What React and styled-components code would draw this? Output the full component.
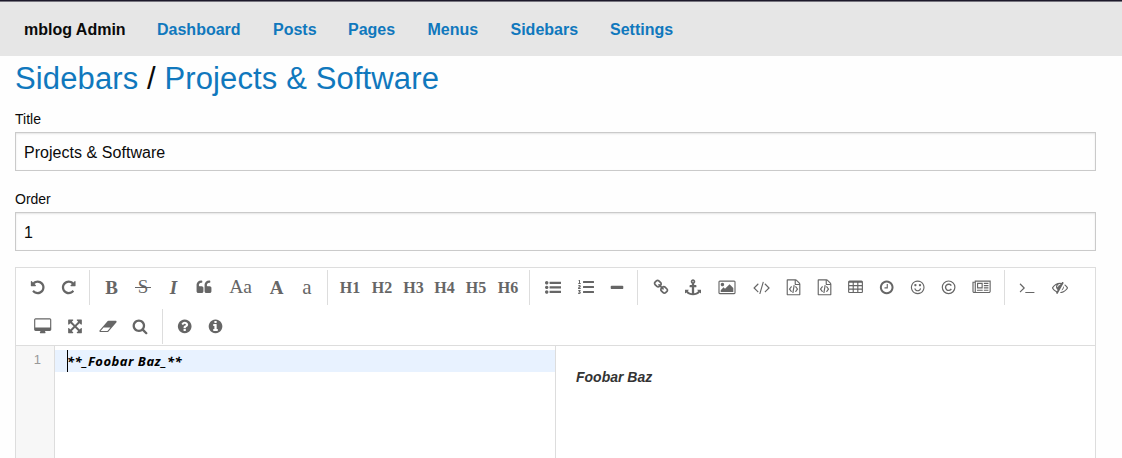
import React from "react";
import styled, { createGlobalStyle } from "styled-components";
import { FaListOl } from "react-icons/fa";

const Global = createGlobalStyle`
  * { box-sizing: border-box; }
  body {
    margin: 0;
    background: #fefefe;
    color: #0a0a0a;
    font-family: "Liberation Sans", Helvetica, Arial, sans-serif;
    overflow: hidden;
  }
`;

const Page = styled.div`
  height: 458px;
  overflow: hidden;
  display: flex;
  flex-direction: column;
`;

const TopBar = styled.nav`
  flex: none;
  height: 56px;
  padding: 4px 24px 0;
  display: flex;
  align-items: center;
  gap: 32px;
  background: linear-gradient(#1d1a2b 0 1px, #77757f 1px 2px, #e6e6e6 2px);
  font-size: 16px;
  line-height: 20px;
  font-weight: bold;
`;

const NavItem = styled.span`
  flex: none;
  width: ${(p) => p.$w}px;
  white-space: nowrap;
  color: ${(p) => (p.$brand ? "#0a0a0a" : "#1078bd")};
`;

const Content = styled.main`
  flex: 1;
  display: flex;
  flex-direction: column;
  width: 1111px;
  padding: 0 15px;
`;

const Heading = styled.h3`
  margin: 0;
  height: 52px;
  padding-top: 1px;
  font-size: 31px;
  line-height: 44px;
  font-weight: normal;
  letter-spacing: 0.12px;
  white-space: nowrap;
`;

const Crumb = styled.a`
  color: #1078bd;
`;

const Field = styled.label`
  display: flex;
  flex-direction: column;
  height: 80px;
  font-size: 14px;
  line-height: 24px;
`;

const FieldName = styled.span`
  height: 24px;
  line-height: 23px;
`;

const Input = styled.input`
  height: 39px;
  width: 100%;
  padding: 2px 8px 0;
  border: 1px solid #cacaca;
  border-radius: 0;
  background: #fefefe;
  box-shadow: inset 0 1px 2px rgba(10, 10, 10, 0.1);
  color: #0a0a0a;
  font: 16px "Liberation Sans", Arial, sans-serif;
  letter-spacing: 0.04px;
  outline: none;
`;

const Editor = styled.section`
  flex: 1;
  display: flex;
  flex-direction: column;
  width: 1081px;
  margin-top: -1px;
  border: 1px solid #ddd;
  border-bottom: 0;
  background: #fff;
`;

const Toolbar = styled.div`
  height: 78px;
  border-bottom: 1px solid #ddd;
  color: #666;
`;

const ToolRow = styled.div`
  display: flex;
  height: 39px;
  padding: 2px 0 0 ${(p) => p.$start}px;
`;

const Tool = styled.span`
  flex: none;
  width: ${(p) => p.$w}px;
  height: 34px;
  display: flex;
  align-items: center;
  justify-content: center;
`;

const Separator = styled.span`
  flex: none;
  width: 1px;
  height: 35px;
  margin: 0 6px 0 5px;
  background: #ddd;
`;

const Letter = styled.span`
  font-family: "Liberation Serif", "Times New Roman", serif;
  font-size: ${(p) => p.$size}px;
  font-weight: ${(p) => (p.$bold ? "bold" : "normal")};
  font-style: ${(p) => (p.$italic ? "italic" : "normal")};
  line-height: 34px;
  padding-top: ${(p) => p.$drop || 0}px;
  white-space: nowrap;
`;

const Struck = styled(Letter)`
  width: 16px;
  text-align: center;
  background: linear-gradient(currentColor, currentColor) center 17px / 16px 1px no-repeat;
`;

const Svg = styled.svg`
  flex: none;
  display: block;
  overflow: visible;
  fill: currentColor;
`;

const Panes = styled.div`
  flex: 1;
  display: flex;
`;

const Gutter = styled.div`
  width: 39px;
  padding: 4px 13px 0 0;
  background: #f7f7f7;
  border-right: 1px solid #ddd;
  color: #999;
  text-align: right;
  font-size: 13px;
  line-height: 20px;
`;

const CodePane = styled.div`
  width: 501px;
  padding-top: 4px;
  border-right: 1px solid #ddd;
`;

const ActiveLine = styled.div`
  height: 22px;
  padding-left: 12px;
  display: flex;
  background: #e8f2ff;
`;

const Source = styled.span`
  border-left: 1px solid #000;
  color: #000;
  font: italic bold 13px/22px "Noto Sans", sans-serif;
  letter-spacing: 0.5px;
  text-indent: -1px;
  white-space: pre;
`;

const Preview = styled.div`
  flex: 1;
  padding: 20px;
  color: #333;
  font-size: 14px;
  line-height: 22px;
  font-weight: bold;
  font-style: italic;
`;

const disc =
  "M1664 896q0 209-103 385.5t-279.5 279.5-385.5 103-385.5-103-279.5-279.5-103-385.5 103-385.5 279.5-279.5 385.5-103 385.5 103 279.5 279.5 103 385.5z";

const cell = (x, y) =>
  `M${x + 32} ${y}h320q32 0 32 32v192q0 32-32 32h-320q-32 0-32-32v-192q0-32 32-32z`;
const cells = [384, 768, 1152].map((y) => [192, 704, 1216].map((x) => cell(x, y)).join("")).join("");

const PATHS = {
  undo: "M1664 896q0 156-61 298t-164 245-245 164-298 61q-172 0-327-72.5t-264-204.5q-7-10-6.5-22.5t8.5-20.5l137-138q10-9 25-9 16 2 23 12 73 95 179 147t225 52q104 0 198.5-40.5t163.5-109.5 109.5-163.5 40.5-198.5-40.5-198.5-109.5-163.5-163.5-109.5-198.5-40.5q-98 0-188 35.5t-160 101.5l137 138q31 30 14 69-17 40-59 40h-448q-26 0-45-19t-19-45v-448q0-42 40-59 39-17 69 14l130 129q107-101 244.5-156.5t284.5-55.5q156 0 298 61t245 164 164 245 61 298z",
  redo: "M1664 256v448q0 26-19 45t-45 19h-448q-42 0-59-40-17-39 14-69l138-138q-148-137-349-137-104 0-198.5 40.5t-163.5 109.5-109.5 163.5-40.5 198.5 40.5 198.5 109.5 163.5 163.5 109.5 198.5 40.5q119 0 225-52t179-147q7-10 23-12 15 0 25 9l137 137q9 8 9.5 20.5t-7.5 22.5q-109 132-264 204.5t-327 72.5q-156 0-298-61t-245-164-164-245-61-298 61-298 164-245 245-164 298-61q147 0 284.5 55.5t244.5 156.5l130-129q29-31 70-14 39 17 39 59z",
  quote: "M832 960v384q0 80-56 136t-136 56h-384q-80 0-136-56t-56-136v-704q0-104 40.5-198.5t109.5-163.5 163.5-109.5 198.5-40.5h64q26 0 45 19t19 45v128q0 26-19 45t-45 19h-64q-106 0-181 75t-75 181v32q0 40 28 68t68 28h224q80 0 136 56t56 136zm896 0v384q0 80-56 136t-136 56h-384q-80 0-136-56t-56-136v-704q0-104 40.5-198.5t109.5-163.5 163.5-109.5 198.5-40.5h64q26 0 45 19t19 45v128q0 26-19 45t-45 19h-64q-106 0-181 75t-75 181v32q0 40 28 68t68 28h224q80 0 136 56t56 136z",
  list: "M384 1408q0 80-56 136t-136 56-136-56-56-136 56-136 136-56 136 56 56 136zm0-512q0 80-56 136t-136 56-136-56-56-136 56-136 136-56 136 56 56 136zm1408 416v192q0 13-9.5 22.5t-22.5 9.5h-1216q-13 0-22.5-9.5t-9.5-22.5v-192q0-13 9.5-22.5t22.5-9.5h1216q13 0 22.5 9.5t9.5 22.5zm-1408-928q0 80-56 136t-136 56-136-56-56-136 56-136 136-56 136 56 56 136zm1408 416v192q0 13-9.5 22.5t-22.5 9.5h-1216q-13 0-22.5-9.5t-9.5-22.5v-192q0-13 9.5-22.5t22.5-9.5h1216q13 0 22.5 9.5t9.5 22.5zm0-512v192q0 13-9.5 22.5t-22.5 9.5h-1216q-13 0-22.5-9.5t-9.5-22.5v-192q0-13 9.5-22.5t22.5-9.5h1216q13 0 22.5 9.5t9.5 22.5z",
  minus: "M1600 800v192q0 40-28 68t-68 28h-1216q-40 0-68-28t-28-68v-192q0-40 28-68t68-28h1216q40 0 68 28t28 68z",
  link: "M1520 1216q0-40-28-68l-208-208q-28-28-68-28-42 0-72 32 3 3 19 18.5t21.5 21.5 15 19 13 25.5 3.5 27.5q0 40-28 68t-68 28q-15 0-27.5-3.5t-25.5-13-19-15-21.5-21.5-18.5-19q-33 31-33 73 0 40 28 68l206 207q27 27 68 27 40 0 68-26l147-146q28-28 28-67zm-703-705q0-40-28-68l-206-207q-28-28-68-28-39 0-68 27l-147 146q-28 28-28 67 0 40 28 68l208 208q27 27 68 27 42 0 72-31-3-3-19-18.5t-21.5-21.5-15-19-13-25.5-3.5-27.5q0-40 28-68t68-28q15 0 27.5 3.5t25.5 13 19 15 21.5 21.5 18.5 19q33-31 33-73zm895 705q0 120-85 203l-147 146q-83 83-203 83-121 0-204-85l-206-207q-83-83-83-203 0-123 88-209l-88-88q-86 88-208 88-120 0-204-84l-208-208q-84-84-84-204t85-203l147-146q83-83 203-83 121 0 204 85l206 207q83 83 83 203 0 123-88 209l88 88q86-88 208-88 120 0 204 84l208 208q84 84 84 204z",
  anchor: "M960 256q0-26-19-45t-45-19-45 19-19 45 19 45 45 19 45-19 19-45zm832 928v352q0 22-20 30-8 2-12 2-12 0-23-9l-93-93q-119 143-318.5 226.5t-429.5 83.5-429.5-83.5-318.5-226.5l-93 93q-9 9-23 9-4 0-12-2-20-8-20-30v-352q0-14 9-23t23-9h352q22 0 30 20 8 19-7 35l-100 100q67 91 189.5 153.5t271.5 82.5v-647h-192q-26 0-45-19t-19-45v-128q0-26 19-45t45-19h192v-163q-58-34-93-92.5t-35-128.5q0-106 75-181t181-75 181 75 75 181q0 70-35 128.5t-93 92.5v163h192q26 0 45 19t19 45v128q0 26-19 45t-45 19h-192v647q149-20 271.5-82.5t189.5-153.5l-100-100q-15-16-7-35 8-20 30-20h352q14 0 23 9t9 23z",
  picture: "M704 576q0 80-56 136t-136 56-136-56-56-136 56-136 136-56 136 56 56 136zm1024 384v448h-1408v-192l320-320 160 160 512-512zm96-704h-1600q-13 0-22.5 9.5t-9.5 22.5v1216q0 13 9.5 22.5t22.5 9.5h1600q13 0 22.5-9.5t9.5-22.5v-1216q0-13-9.5-22.5t-22.5-9.5zm160 32v1216q0 66-47 113t-113 47h-1600q-66 0-113-47t-47-113v-1216q0-66 47-113t113-47h1600q66 0 113 47t47 113z",
  code: "M681 1399l-50 50q-10 10-23 10t-23-10l-466-466q-10-10-10-23t10-23l466-466q10-10 23-10t23 10l50 50q10 10 10 23t-10 23l-393 393 393 393q10 10 10 23t-10 23zm591-1067l-373 1291q-4 13-15.5 19.5t-23.5 2.5l-62-17q-13-4-19.5-15.5t-2.5-24.5l373-1291q4-13 15.5-19.5t23.5-2.5l62 17q13 4 19.5 15.5t2.5 24.5zm657 651l-466 466q-10 10-23 10t-23-10l-50-50q-10-10-10-23t10-23l393-393-393-393q-10-10-10-23t10-23l50-50q10-10 23-10t23 10l466 466q10 10 10 23t-10 23z",
  file: "M1596 380q28 28 48 76t20 88v1152q0 40-28 68t-68 28h-1344q-40 0-68-28t-28-68v-1600q0-40 28-68t68-28h896q40 0 88 20t76 48zm-444-244v376h376q-10-29-22-41l-313-313q-12-12-41-22zm384 1528v-1024h-416q-40 0-68-28t-28-68v-416h-768v1536h1280zm-928-896q8-11 21-12.5t24 6.5l51 38q11 8 12.5 21t-6.5 24l-182 243 182 243q8 11 6.5 24t-12.5 21l-51 38q-11 8-24 6.5t-21-12.5l-226-301q-14-19 0-38zm802 301q14 19 0 38l-226 301q-8 11-21 12.5t-24-6.5l-51-38q-11-8-12.5-21t6.5-24l182-243-182-243q-8-11-6.5-24t12.5-21l51-38q11-8 24-6.5t21 12.5zm-620 461q-13-2-20.5-13t-5.5-24l138-831q2-13 13-20.5t24-5.5l63 10q13 2 20.5 13t5.5 24l-138 831q-2 13-13 20.5t-24 5.5z",
  table: "M224 128h1344q66 0 113 47t47 113v1088q0 66-47 113t-113 47h-1344q-66 0-113-47t-47-113v-1088q0-66 47-113t113-47z" + cells,
  clock: "M1024 544v448q0 14-9 23t-23 9h-320q-14 0-23-9t-9-23v-64q0-14 9-23t23-9h224v-352q0-14 9-23t23-9h64q14 0 23 9t9 23zm416 352q0-148-73-273t-198-198-273-73-273 73-198 198-73 273 73 273 198 198 273 73 273-73 198-198 73-273z" + disc,
  smile: "M1262 1075q-37 121-138 195t-228 74-228-74-138-195q-8-25 4-48.5t38-31.5q25-8 48.5 4t31.5 38q25 80 92.5 129.5t151.5 49.5 151.5-49.5 92.5-129.5q8-26 32-38t49-4 37 31.5 4 48.5zm-494-435q0 53-37.5 90.5t-90.5 37.5-90.5-37.5-37.5-90.5 37.5-90.5 90.5-37.5 90.5 37.5 37.5 90.5zm512 0q0 53-37.5 90.5t-90.5 37.5-90.5-37.5-37.5-90.5 37.5-90.5 90.5-37.5 90.5 37.5 37.5 90.5zm256 256q0-130-51-248.5t-136.5-204-204-136.5-248.5-51-248.5 51-204 136.5-136.5 204-51 248.5 51 248.5 136.5 204 204 136.5 248.5 51 248.5-51 204-136.5 136.5-204 51-248.5zm128 0q0 209-103 385.5t-279.5 279.5-385.5 103-385.5-103-279.5-279.5-103-385.5 103-385.5 279.5-279.5 385.5-103 385.5 103 279.5 279.5 103 385.5z",
  news: "M1024 512h-384v384h384v-384zm128 640v128h-640v-128h640zm0-768v640h-640v-640h640zm640 768v128h-512v-128h512zm0-256v128h-512v-128h512zm0-256v128h-512v-128h512zm0-256v128h-512v-128h512zm-1536 960v-960h-128v960q0 26 19 45t45 19 45-19 19-45zm1664 0v-1088h-1536v1088q0 33-11 64h1483q26 0 45-19t19-45zm128-1216v1216q0 80-56 136t-136 56h-1664q-80 0-136-56t-56-136v-1088h256v-128h1792z",
  terminal: "M649 983l-466 466q-10 10-23 10t-23-10l-50-50q-10-10-10-23t10-23l393-393-393-393q-10-10-10-23t10-23l50-50q10-10 23-10t23 10l466 466q10 10 10 23t-10 23zm1079 457v64q0 14-9 23t-23 9h-960q-14 0-23-9t-9-23v-64q0-14 9-23t23-9h960q14 0 23 9t9 23z",
  eyeSlash: "M555 1335l78-141q-87-63-136-159t-49-203q0-121 61-225-229 117-381 353 167 258 427 375zm389-759q0-20-14-34t-34-14q-125 0-214.5 89.5t-89.5 214.5q0 20 14 34t34 14 34-14 14-34q0-86 61-147t147-61q20 0 34-14t14-34zm363-191q0 7-1 9-105 188-315 566t-316 567l-49 89q-10 16-28 16-12 0-134-70-16-10-16-28 0-12 44-87-143-65-263.5-173t-208.5-245q-20-31-20-69t20-69q153-235 380-371t496-136q89 0 180 17l54-97q10-16 28-16 5 0 18 6t31 15.5 33 18.5 31.5 18.5 19.5 11.5q16 10 16 27zm37 447q0 139-79 253.5t-209 164.5l280-502q8 45 8 84zm448 128q0 35-20 69-39 64-109 145-150 172-347.5 267t-419.5 95l74-132q212-18 392.5-137t301.5-307q-115-179-282-294l63-112q95 64 182.5 153t144.5 184q20 34 20 69z",
  desktop: "M1728 992v-832q0-13-9.5-22.5t-22.5-9.5h-1600q-13 0-22.5 9.5t-9.5 22.5v832q0 13 9.5 22.5t22.5 9.5h1600q13 0 22.5-9.5t9.5-22.5zm128-832v1088q0 66-47 113t-113 47h-544q0 37 16 77.5t32 71 16 43.5q0 26-19 45t-45 19h-512q-26 0-45-19t-19-45q0-14 16-44t32-70 16-78h-544q-66 0-113-47t-47-113v-1088q0-66 47-113t113-47h1600q66 0 113 47t47 113z",
  arrows: "M1411 541l-355 355 355 355 144-144q29-31 70-14 39 17 39 59v448q0 26-19 45t-45 19h-448q-42 0-59-40-17-39 14-69l144-144-355-355-355 355 144 144q31 30 14 69-17 40-59 40h-448q-26 0-45-19t-19-45v-448q0-42 40-59 39-17 69 14l144 144 355-355-355-355-144 144q-19 19-45 19-12 0-24-5-40-17-40-59v-448q0-26 19-45t45-19h448q42 0 59 40 17 39-14 69l-144 144 355 355 355-355-144-144q-31-30-14-69 17-40 59-40h448q26 0 45 19t19 45v448q0 42-39 59-13 5-25 5-26 0-45-19z",
  eraser: "M832 1408l336-384h-768l-336 384h768zm1013-1077q15 34 9.5 71.5t-30.5 65.5l-896 1024q-38 44-96 44h-768q-38 0-69.5-20.5t-47.5-54.5q-15-34-9.5-71.5t30.5-65.5l896-1024q38-44 96-44h768q38 0 69.5 20.5t47.5 54.5z",
  search: "M1216 832q0-185-131.5-316.5t-316.5-131.5-316.5 131.5-131.5 316.5 131.5 316.5 316.5 131.5 316.5-131.5 131.5-316.5zm512 832q0 52-38 90t-90 38q-54 0-90-38l-343-342q-179 124-399 124-143 0-273.5-55.5t-225-150-150-225-55.5-273.5 55.5-273.5 150-225 225-150 273.5-55.5 273.5 55.5 225 150 150 225 55.5 273.5q0 220-124 399l343 343q37 37 37 90z",
  question: "M1024 1376v-192q0-14-9-23t-23-9h-192q-14 0-23 9t-9 23v192q0 14 9 23t23 9h192q14 0 23-9t9-23zm256-672q0-88-55.5-163t-138.5-116-170-41q-243 0-371 213-15 24 8 42l132 100q7 6 19 6 16 0 25-12 53-68 86-92 34-24 86-24 48 0 85.5 26t37.5 59q0 38-20 61t-68 45q-63 28-115.5 86.5t-52.5 125.5v36q0 14 9 23t23 9h192q14 0 23-9t9-23q0-19 21.5-49.5t54.5-49.5q32-18 49-28.5t46-35 44.5-48 28-60.5 12.5-81z" + disc,
  info: "M1152 1376v-160q0-14-9-23t-23-9h-96v-512q0-14-9-23t-23-9h-320q-14 0-23 9t-9 23v160q0 14 9 23t23 9h96v320h-96q-14 0-23 9t-9 23v160q0 14 9 23t23 9h448q14 0 23-9t9-23zm-128-896v-160q0-14-9-23t-23-9h-192q-14 0-23 9t-9 23v160q0 14 9 23t23 9h192q14 0 23-9t9-23z" + disc,
};

const CENTRES = { picture: 1024, code: 1072, news: 1072, file: 950, table: 950, clock: 930, smile: 930, question: 930, info: 950, undo: 930, redo: 930, desktop: 930 };

const Icon = ({ name }) => {
  const x = (CENTRES[name] || 896) - 896;
  return (
    <Svg width="16" height="16" viewBox={`${x} -40 1792 1792`}>
      <path fillRule="evenodd" d={PATHS[name]} />
    </Svg>
  );
};

const Copyright = () => (
  <Svg width="16" height="16" viewBox="0 0 16 16">
    <g style={{ fill: "none" }} stroke="currentColor">
      <circle cx="7.6" cy="8.3" r="6.3" strokeWidth="1.2" />
      <path d="M10.3 6.7A3.1 3.1 0 1 0 10.3 9.9" strokeWidth="1.4" />
    </g>
  </Svg>
);

const icon = (name, w) => ({ w, node: <Icon name={name} /> });
const letter = (text, w, $size, extra = {}) => ({ w, node: <Letter $size={$size} {...extra}>{text}</Letter> });
const sep = { sep: true };

const MAIN_TOOLS = [
  icon("undo", 31), icon("redo", 31), sep,
  letter("B", 31, 19, { $bold: true, $drop: 1 }),
  { w: 32, node: <Struck $size={19}>S</Struck> },
  letter("I", 29, 19, { $bold: true, $italic: true, $drop: 1 }),
  icon("quote", 32),
  letter("Aa", 41, 19.5), letter("A", 31, 19, { $bold: true, $drop: 1 }), letter("a", 30, 21), sep,
  ...[32, 32, 31, 31, 32, 32].map((w, i) => letter(`H${i + 1}`, w, 16, { $bold: true, $drop: 2 })), sep,
  icon("list", 34), { w: 32, node: <FaListOl size={16} /> }, icon("minus", 30), sep,
  icon("link", 34), icon("anchor", 30), icon("picture", 37), icon("code", 33),
  icon("file", 31), icon("file", 31), icon("table", 31), icon("clock", 31), icon("smile", 31),
  { w: 31, node: <Copyright /> }, icon("news", 35), sep,
  icon("terminal", 32), icon("eyeSlash", 34),
];

const MORE_TOOLS = [
  icon("desktop", 31), icon("arrows", 34), icon("eraser", 31), icon("search", 34), sep,
  icon("question", 32), icon("info", 29),
];

const Tools = ({ items, start }) => (
  <ToolRow $start={start}>
    {items.map((t, i) => (t.sep ? <Separator key={i} /> : <Tool key={i} $w={t.w}>{t.node}</Tool>))}
  </ToolRow>
);

const NAV = [
  ["Dashboard", 84],
  ["Posts", 43],
  ["Pages", 47.5],
  ["Menus", 51],
  ["Sidebars", 67.5],
  ["Settings", 64],
];

export default function App() {
  return (
    <Page>
      <Global />
      <TopBar>
        <NavItem $brand $w={101}>mblog Admin</NavItem>
        {NAV.map(([name, w]) => <NavItem key={name} $w={w}>{name}</NavItem>)}
      </TopBar>
      <Content>
        <Heading><Crumb>Sidebars</Crumb> / <Crumb>Projects &amp; Software</Crumb></Heading>
        <Field><FieldName>Title</FieldName><Input readOnly value="Projects &amp; Software" /></Field>
        <Field><FieldName>Order</FieldName><Input readOnly value="1" /></Field>
        <Editor>
          <Toolbar>
            <Tools items={MAIN_TOOLS} start={6} />
            <Tools items={MORE_TOOLS} start={11} />
          </Toolbar>
          <Panes>
            <Gutter>1</Gutter>
            <CodePane>
              <ActiveLine><Source>**_Foobar Baz_**</Source></ActiveLine>
            </CodePane>
            <Preview>Foobar Baz</Preview>
          </Panes>
        </Editor>
      </Content>
    </Page>
  );
}
